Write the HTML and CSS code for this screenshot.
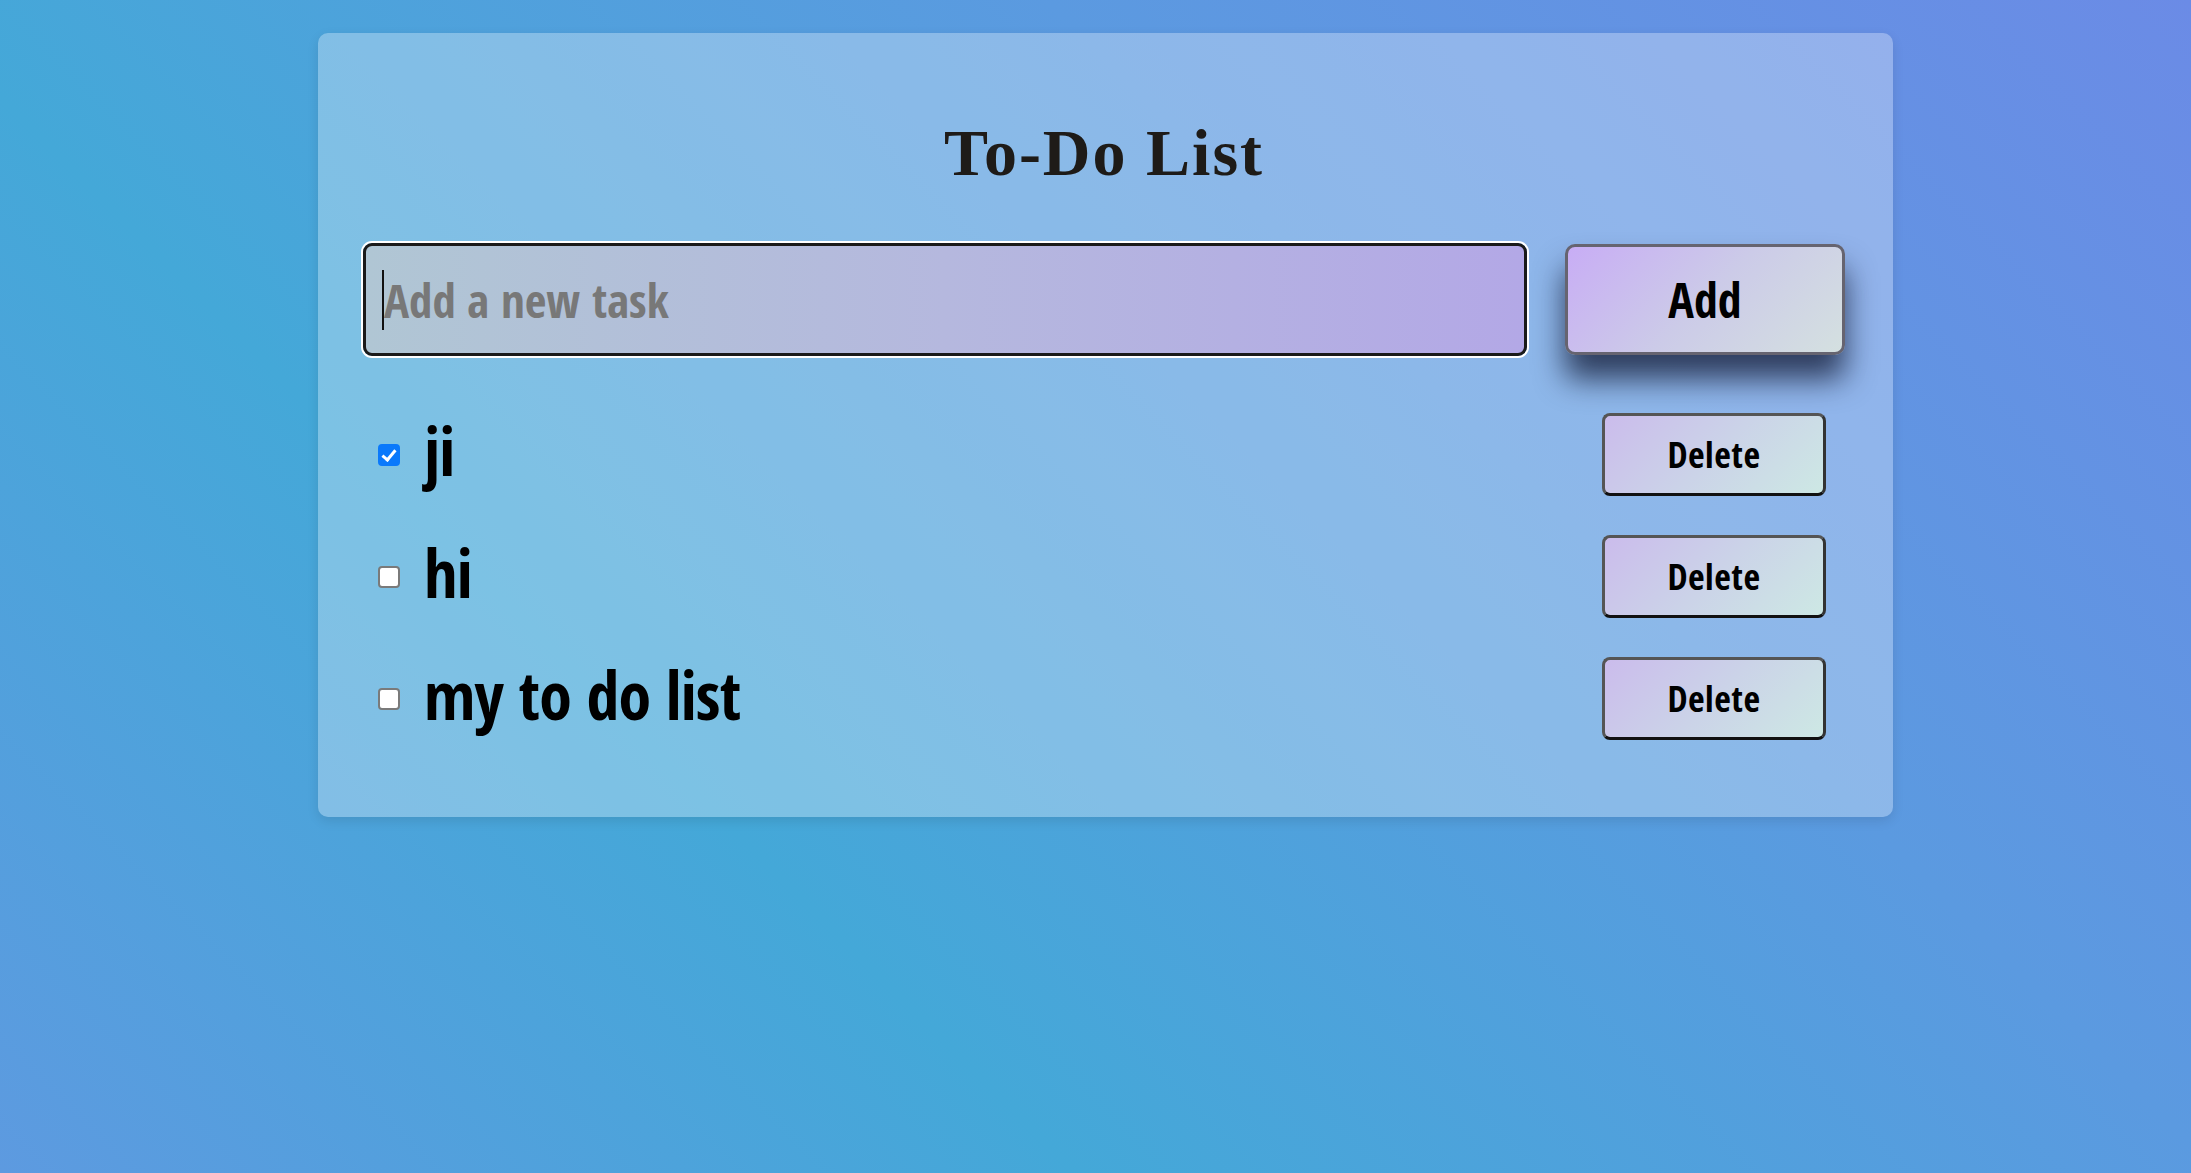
FILE: index.html
```html
<!DOCTYPE html>
<html lang="en">
<head>
<meta charset="utf-8">
<title>To-Do List</title>
<link rel="stylesheet" href="styles.css">
</head>
<body>
  <main class="card">
    <h1 class="title">To-Do List</h1>
    <div class="input-row">
      <div class="input-wrap">
        <input class="task-input" type="text" placeholder="Add a new task">
        <span class="caret"></span>
      </div>
      <button class="add-btn">Add</button>
    </div>
    <ul class="list">
      <li class="item">
        <input class="check" type="checkbox" checked>
        <span class="task-text">ji</span>
        <button class="del-btn">Delete</button>
      </li>
      <li class="item">
        <input class="check" type="checkbox">
        <span class="task-text">hi</span>
        <button class="del-btn">Delete</button>
      </li>
      <li class="item">
        <input class="check" type="checkbox">
        <span class="task-text">my to do list</span>
        <button class="del-btn">Delete</button>
      </li>
    </ul>
  </main>
</body>
</html>
```

FILE: styles.css
```css
html, body {
  margin: 0;
  padding: 0;
}

body {
  min-height: 1173px;
  background: linear-gradient(45deg, #5d9ae0 0%, #44a8d8 32%, #5b9ae0 66%, #6b8be6 100%);
  font-family: "Open Sans Condensed", "Roboto Condensed", "Open Sans", sans-serif;
  font-stretch: 75%;
  overflow: hidden;
}

.card {
  box-sizing: border-box;
  width: 1575px;
  margin: 33px 0 0 318px;
  padding: 80px 48px 77px 45px;
  background: rgba(255, 255, 255, 0.3);
  border-radius: 10px;
  box-shadow: 0 4px 12px rgba(0, 0, 0, 0.1);
}

.title {
  margin: 0 0 50px;
  text-align: center;
  font-family: "Liberation Serif", "DejaVu Serif", serif;
  font-stretch: normal;
  font-weight: bold;
  font-size: 66px;
  letter-spacing: 2px;
  line-height: 80px;
  color: #1e1b18;
}

.input-row {
  display: flex;
  align-items: center;
  gap: 38px;
}

.input-wrap {
  position: relative;
  flex: 1;
  display: flex;
}

.task-input {
  box-sizing: border-box;
  flex: 1;
  height: 113px;
  padding: 0 18px;
  border: 3px solid #1a1a1a;
  border-radius: 9px;
  box-shadow: 0 0 0 2px #ffffff;
  outline: none;
  background: linear-gradient(90deg, #b0c6d4 0%, #b5b8de 50%, #b3a8e6 100%);
  font-family: inherit;
  font-stretch: 75%;
  font-weight: bold;
  font-size: 47px;
  color: #111;
}

.task-input::placeholder {
  color: #787878;
}

.caret {
  position: absolute;
  left: 19px;
  top: 27px;
  width: 2px;
  height: 60px;
  background: #111;
}

.add-btn {
  box-sizing: border-box;
  width: 280px;
  height: 111px;
  border: 3px solid #666470;
  border-radius: 10px;
  background: linear-gradient(135deg, #c8adf5 0%, #cccbe8 50%, #d4e0e0 100%);
  box-shadow: 0 24px 30px rgba(10, 15, 40, 0.72);
  font-family: inherit;
  font-stretch: 75%;
  font-weight: 800;
  font-size: 48px;
  color: #000;
  cursor: pointer;
}

.list {
  list-style: none;
  margin: 57px 19px 0 15px;
  padding: 0;
  display: flex;
  flex-direction: column;
  gap: 39px;
}

.item {
  display: flex;
  align-items: center;
  height: 83px;
}

.check {
  position: relative;
  appearance: none;
  -webkit-appearance: none;
  box-sizing: border-box;
  width: 22px;
  height: 22px;
  margin: 0;
  border: 2px solid #7a7a7a;
  border-radius: 4px;
  background: #ffffff;
}

.check:checked {
  border-color: #0a79fb;
  background: #0a79fb;
}

.check:checked::after {
  content: "";
  position: absolute;
  left: 5px;
  top: 1px;
  width: 5px;
  height: 11px;
  border: solid #ffffff;
  border-width: 0 3px 3px 0;
  transform: rotate(40deg);
}

.task-text {
  flex: 1;
  margin-left: 24px;
  padding-bottom: 10px;
  font-weight: 800;
  font-size: 66px;
  letter-spacing: -0.8px;
  line-height: 1;
  color: #000;
}

.del-btn {
  box-sizing: border-box;
  width: 224px;
  height: 83px;
  border: 3px solid;
  border-color: #555555 #333333 #111111 #555555;
  border-radius: 8px;
  background: linear-gradient(135deg, #cbbcec 0%, #cbd3e8 50%, #cde8e4 100%);
  font-family: inherit;
  font-stretch: 75%;
  font-weight: 600;
  font-size: 36px;
  letter-spacing: 0.5px;
  color: #000;
  cursor: pointer;
}
```
